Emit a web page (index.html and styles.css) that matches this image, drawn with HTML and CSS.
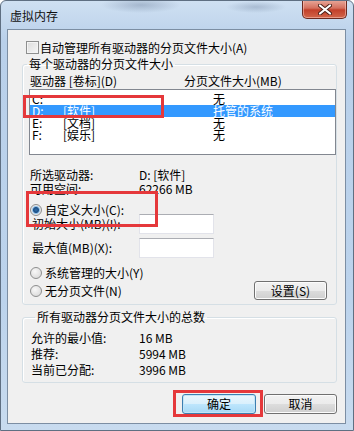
FILE: index.html
```html
<!DOCTYPE html>
<html lang="zh-CN">
<head>
  <meta charset="UTF-8">
  <meta name="viewport" content="width=device-width, initial-scale=1.0">
  <title>虚拟内存</title>
  <link rel="stylesheet" href="styles.css">
</head>
<body>
  <div class="window">
    <div class="titlebar">
      <span class="title">虚拟内存</span>
      <span class="close">
        <svg width="14" height="11" viewBox="0 0 14 11">
          <path d="M2 1.5 L12 9.5 M12 1.5 L2 9.5" stroke="#4a2018" stroke-width="4" stroke-linecap="round"/>
          <path d="M2 1.5 L12 9.5 M12 1.5 L2 9.5" stroke="#ffffff" stroke-width="2.2" stroke-linecap="round"/>
        </svg>
      </span>
    </div>

    <div class="client">
      <div class="check-row"><span class="checkbox"></span>自动管理所有驱动器的分页文件大小(A)</div>

      <fieldset class="group group-drives">
        <legend>每个驱动器的分页文件大小</legend>
        <div class="list-head">
          <span class="col-drive">驱动器 [卷标](D)</span>
          <span>分页文件大小(MB)</span>
        </div>
        <div class="listbox">
          <div class="row"><span class="c1">C:</span><span class="c2"></span><span>无</span></div>
          <div class="row selected"><span class="c1">D:</span><span class="c2">[软件]</span><span>托管的系统</span></div>
          <div class="row"><span class="c1">E:</span><span class="c2">[文档]</span><span>无</span></div>
          <div class="row"><span class="c1">F:</span><span class="c2">[娱乐]</span><span>无</span></div>
        </div>

        <div class="info">
          <div class="info-row"><span class="info-label">所选驱动器:</span><span>D:  [软件]</span></div>
          <div class="info-row"><span class="info-label">可用空间:</span><span>62266 MB</span></div>
        </div>

        <div class="radio-row radio-custom"><span class="radio checked"></span>自定义大小(C):</div>
        <div class="field-row first"><span class="field-label">初始大小(MB)(I):</span><span class="textbox"></span></div>
        <div class="field-row"><span class="field-label">最大值(MB)(X):</span><span class="textbox"></span></div>
        <div class="radio-row radio-system"><span class="radio"></span>系统管理的大小(Y)</div>
        <div class="radio-row radio-none">
          <span class="radio"></span>无分页文件(N)
          <span class="btn btn-set">设置(S)</span>
        </div>
      </fieldset>

      <fieldset class="group group-total">
        <legend>所有驱动器分页文件大小的总数</legend>
        <div class="total-row"><span class="total-label">允许的最小值:</span><span>16 MB</span></div>
        <div class="total-row"><span class="total-label">推荐:</span><span>5994 MB</span></div>
        <div class="total-row"><span class="total-label">当前已分配:</span><span>3996 MB</span></div>
      </fieldset>

      <div class="buttons">
        <span class="btn btn-default">确定</span>
        <span class="btn">取消</span>
      </div>

      <!-- red marks drawn over the dialog -->
      <div class="mark mark-list"></div>
      <div class="mark mark-custom"></div>
      <div class="mark mark-ok"></div>
    </div>
  </div>
</body>
</html>
```

FILE: styles.css
```css
* {
  box-sizing: border-box;
}

body {
  margin: 0;
  font-family: "Noto Sans CJK SC", "Noto Sans", sans-serif;
  font-size: 12px;
  line-height: 12px;
  color: #000;
  background: #fff;
}

.window {
  width: 354px;
  height: 431px;
  border: 1px solid #5f6f82;
  border-radius: 6px 6px 0 0;
  background:
    radial-gradient(ellipse 40px 8px at 140px 4px, rgba(90, 110, 140, 0.35), transparent),
    radial-gradient(ellipse 30px 6px at 255px 6px, rgba(90, 110, 140, 0.3), transparent),
    linear-gradient(#cfe0f2, #b9d0ea 40px, #bcd3ec 300px, #c8dbef);
  overflow: hidden;
}

.titlebar {
  height: 28px;
  display: flex;
  justify-content: space-between;
  align-items: flex-start;
}

.title {
  padding: 9px 0 0 9px;
  color: #111;
}

.close {
  width: 45px;
  height: 19px;
  margin: -1px 6px 0 0;
  display: flex;
  align-items: center;
  justify-content: center;
  border: 1px solid #6b2a20;
  border-top: none;
  border-radius: 0 0 5px 5px;
  background: linear-gradient(#e9aa9c, #d4705e 45%, #c2402a 55%, #d2664a);
  box-shadow: inset 0 0 0 1px rgba(255, 210, 200, 0.5);
}

.client {
  position: relative;
  width: 339px;
  height: 395px;
  margin-left: 6px;
  padding-top: 11px;
  border: 1px solid #7c8ea3;
  background: #f0f0f0;
}

.check-row {
  display: flex;
  align-items: center;
  height: 13px;
  margin-left: 18px;
}

.checkbox {
  width: 13px;
  height: 13px;
  margin-right: 1px;
  border: 1px solid #8e8f8f;
  background: linear-gradient(135deg, #dcdcdc, #f6f6f6);
  box-shadow: inset 0 0 0 1px #f4f4f4;
}

.group {
  margin: 0 8px 0 14px;
  padding: 0;
  border: 1px solid #d5dfe5;
  border-radius: 3px;
  box-shadow: inset 1px 1px 0 #fff;
}

.group legend {
  margin-left: 4px;
  padding: 0 2px;
  line-height: 12px;
}

.group-drives {
  margin-top: 4px;
  padding-bottom: 4px;
}

.list-head {
  display: flex;
  margin-top: 5px;
  padding-left: 7px;
}

.col-drive {
  width: 154px;
}

.listbox {
  width: 307px;
  height: 66px;
  margin: 2px 0 0 6px;
  padding-top: 3px;
  border: 1px solid #828790;
  background: #fff;
}

.row {
  display: flex;
  height: 12px;
  padding-left: 2px;
}

.row.selected {
  background: #3399ff;
  color: #fff;
}

.c1 {
  width: 31px;
}

.c2 {
  width: 150px;
}

.info {
  margin-top: 13px;
  padding-left: 7px;
}

.info-row {
  display: flex;
  height: 14px;
  align-items: center;
}

.info-label {
  width: 109px;
}

.radio-row {
  display: flex;
  align-items: center;
  height: 12px;
  padding-left: 7px;
}

.radio {
  width: 12px;
  height: 12px;
  margin-right: 3px;
  border: 1px solid #8e8f8f;
  border-radius: 50%;
  background: radial-gradient(circle at 40% 35%, #f8f8f8, #d4d4d4);
}

.radio.checked {
  background: radial-gradient(circle, #2f6ea8 0, #1c4f86 2.5px, #8fc0e8 3.5px, #e8e8e8 4.5px, #d4d4d4);
}

.radio-custom {
  margin-top: 8px;
}

.field-row {
  display: flex;
  align-items: center;
  height: 20px;
  margin-top: 4px;
  padding-left: 9px;
}

.field-row.first {
  margin-top: -2px;
}

.field-label {
  width: 107px;
}

.textbox {
  width: 75px;
  height: 20px;
  border: 1px solid #e2e3ea;
  border-top-color: #abadb3;
  background: #fff;
}

.radio-system {
  margin-top: 9px;
}

.radio-none {
  height: 19px;
  margin-top: 2px;
}

.btn {
  display: flex;
  align-items: center;
  justify-content: center;
  width: 73px;
  height: 20px;
  border: 1px solid #707070;
  border-radius: 3px;
  background: linear-gradient(#f2f2f2, #ebebeb 50%, #dddddd 50%, #cfcfcf);
  box-shadow: inset 0 0 0 1px #fcfcfc;
}

.btn-set {
  height: 19px;
  margin: 0 9px 0 auto;
}

.group-total {
  margin-top: 6px;
  padding: 7px 0 4px 8px;
}

.total-row {
  display: flex;
  align-items: center;
  height: 16px;
}

.total-label {
  width: 108px;
}

.buttons {
  display: flex;
  justify-content: flex-end;
  gap: 8px;
  margin: 11px 8px 0 0;
}

.btn-default {
  width: 74px;
  border-color: #3c7fb1;
  background: linear-gradient(#eaf6fd, #d9f0fc 50%, #bee6fd 50%, #a7d9f5);
  box-shadow: inset 0 0 0 1px #c4e5f6;
}

.mark {
  position: absolute;
  border: 3px solid #e5383b;
}

.mark-list {
  left: 15px;
  top: 65px;
  width: 141px;
  height: 23px;
}

.mark-custom {
  left: 18px;
  top: 161px;
  width: 132px;
  height: 36px;
}

.mark-ok {
  left: 165px;
  top: 360px;
  width: 90px;
  height: 27px;
}
```
